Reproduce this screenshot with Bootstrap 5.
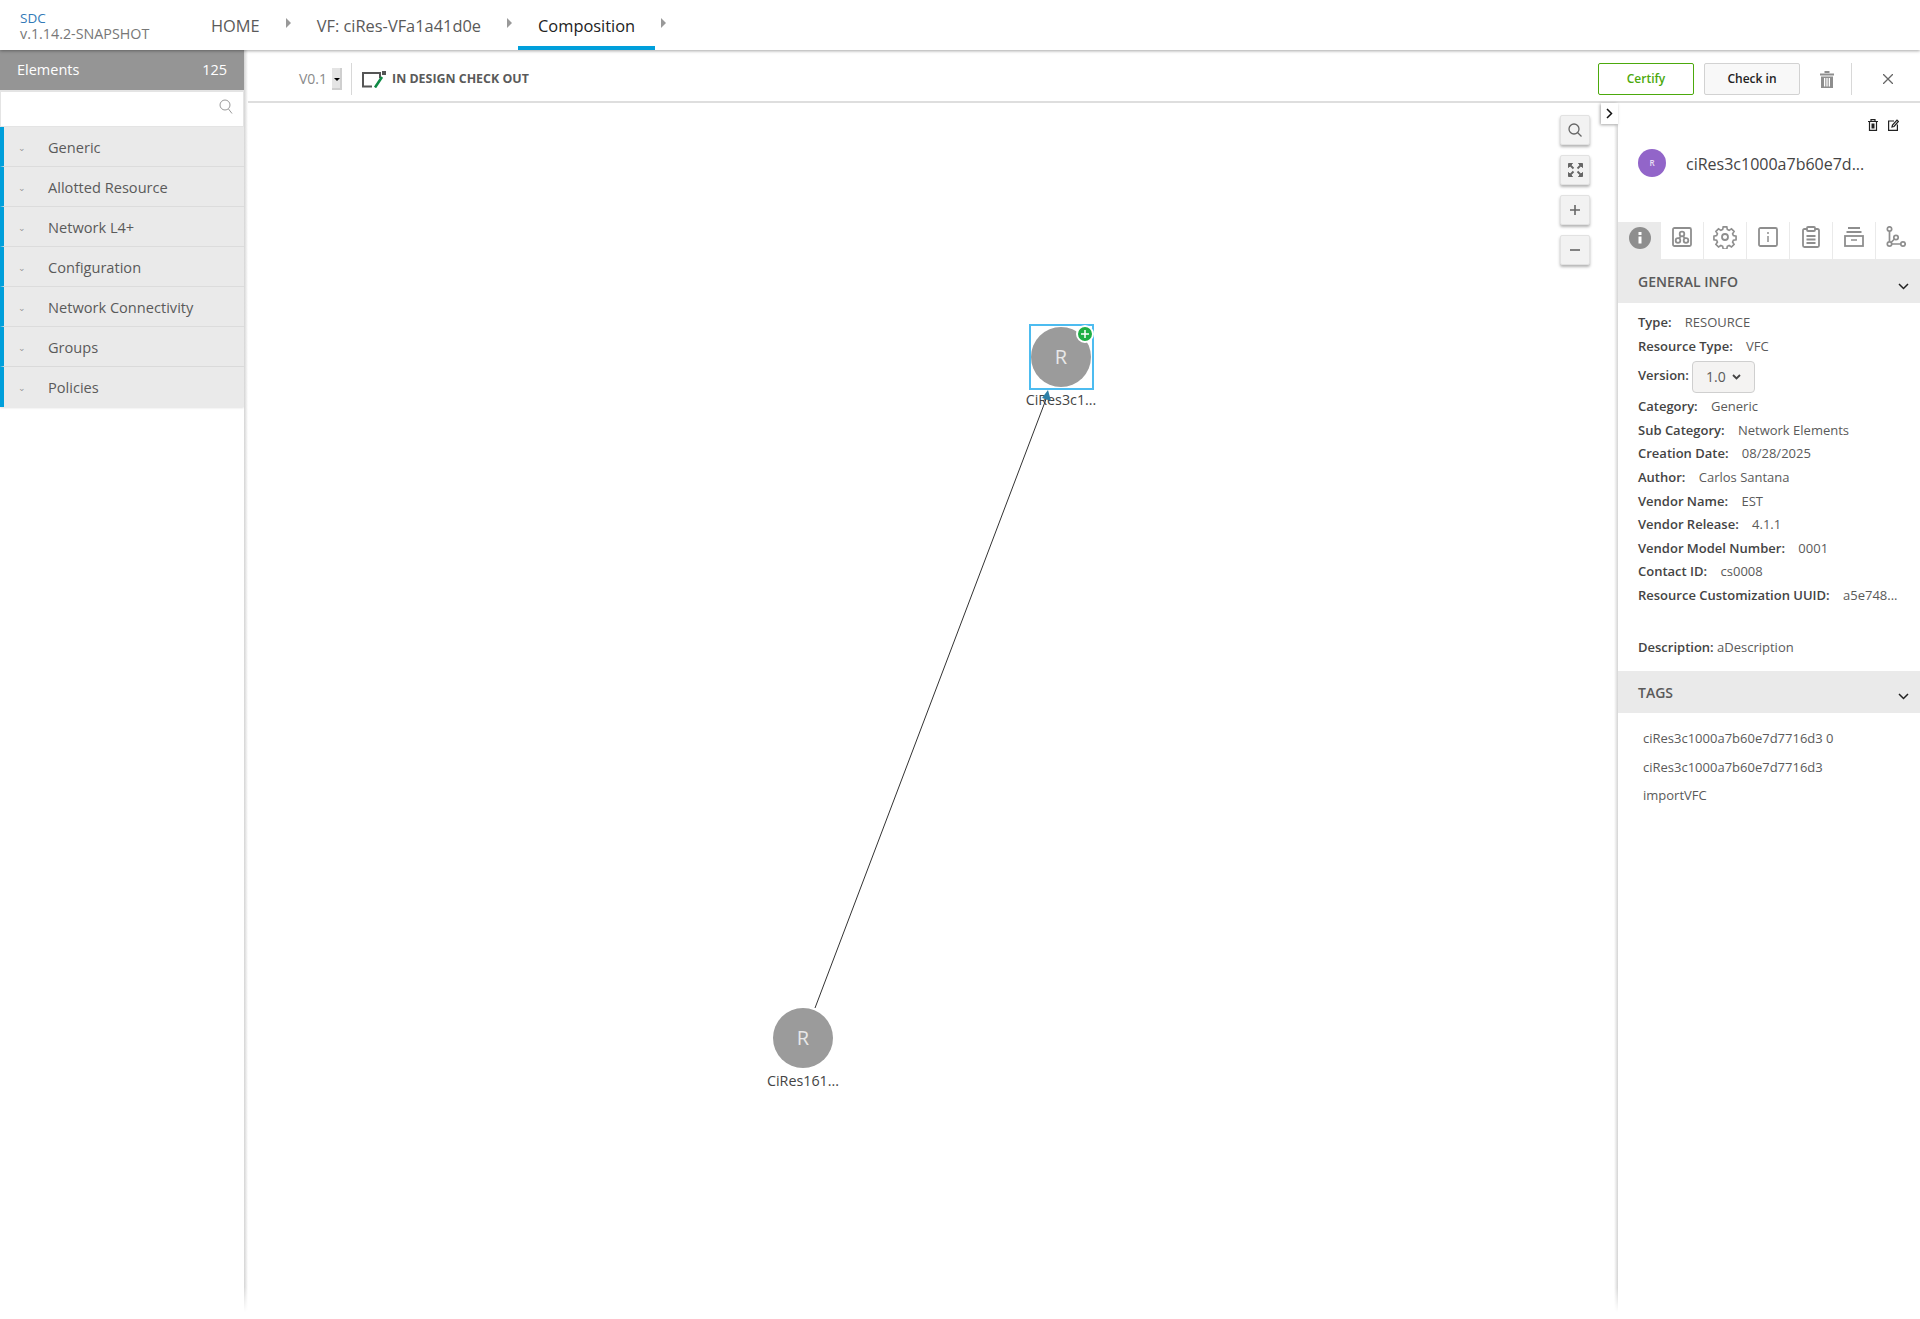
<!doctype html>
<html lang="en">
<head>
  <meta charset="utf-8">
  <meta name="viewport" content="width=device-width, initial-scale=1">
  <title>SDC Composition</title>
  <link href="https://cdn.jsdelivr.net/npm/bootstrap@5.3.3/dist/css/bootstrap.min.css" rel="stylesheet">
  <style>
    html, body { height: 100%; }
    body { font-family: "Open Sans", "Liberation Sans", sans-serif; color: #5a5a5a; overflow: hidden; background: #fff; }
    .sdc-top { height: 50px; position: relative; z-index: 5; box-shadow: 0 1px 3px rgba(0,0,0,.35); background: #fff; }
    .sdc-logo { width: 191px; padding-left: 20px; line-height: 15px; padding-top: 11px; }
    .sdc-logo b { display: block; font-weight: 400; font-size: 13.5px; color: #337ab7; }
    .sdc-logo span { font-size: 14.3px; color: #777; white-space: nowrap; }
    .crumb { font-size: 16.4px; color: #5a5a5a; height: 50px; line-height: 51px; padding: 0 20px; white-space: nowrap; }
    .crumb.on { color: #222; border-bottom: 4px solid #009fdb; }
    .crumb-arrow { width: 0; height: 0; flex: none; border-left: 5px solid #999; border-top: 5px solid transparent; border-bottom: 5px solid transparent; margin: 0 6px 4px; }
    .sdc-main { height: 1262px; }
    .sdc-side { width: 244px; flex: none; background: #fff; position: relative; z-index: 3; }
    .sdc-side::after { content: ""; position: absolute; left: 100%; top: 0; bottom: 0; width: 4px; background: linear-gradient(to right, #d4d4d4, #fff); -webkit-mask-image: linear-gradient(to bottom, #000 98%, transparent); }
    .side-head { height: 40px; background: #959595; color: #fff; font-size: 14.5px; padding: 0 17px; }
    .side-search { height: 37px; border: 1px solid #e4e4e4; border-top-width: 2px; padding: 0 10px 5px 0; }
    .side-item { height: 40px; padding-top: 2px; background: #eaeaea; border-left: 4px solid #009fdb; border-bottom: 1px solid #dcdcdc; font-size: 14.6px; color: #5a5a5a; }
    .side-item:last-child { border-bottom: 0; box-shadow: 0 1px 2px rgba(0,0,0,.12); }
    .side-caret { width: 44px; padding-left: 14px; font-size: 9px; color: #999; }
    .sdc-bar { height: 53px; border-bottom: 2px solid #dedede; padding: 7px 20px 0 55px; }
    .ver-txt { font-size: 14px; color: #8a8a8a; margin-top: -2px; }
    .ver-sel { width: 10px; height: 22px; background: #e4e4e4; border: 1px solid #cfcfcf; border-width: 0 2px 2px 0; margin-left: 5px; position: relative; }
    .ver-sel::after { content: ""; position: absolute; left: 2px; top: 10px; border-left: 3px solid transparent; border-right: 3px solid transparent; border-top: 3px solid #000; }
    .bar-sep { width: 1px; height: 32px; background: #d8d8d8; flex: none; }
    .sep-ver { margin: 0 10px 0 9px; }
    .state-icon { margin-right: 6px; }
    .design-state { font-size: 12.4px; font-weight: 700; color: #5a5a5a; }
    .btn-certify, .btn-certify:hover { width: 96px; height: 32px; padding: 0; font-size: 12px; font-weight: 600; color: #4ca90c; border: 1px solid #4ca90c; background: #fff; border-radius: 2px; }
    .btn-checkin, .btn-checkin:hover { width: 96px; height: 32px; padding: 0; margin-left: 10px; font-size: 12px; font-weight: 600; color: #222; border: 1px solid #d2d2d2; background: #f8f8f8; border-radius: 2px; }
    .bar-trash { margin: 0 17px 0 20px; }
    .bar-close { margin: 0 7px 0 31px; }
    .sdc-body { height: 1209px; }
    .sdc-canvas { position: relative; flex: 1 1 auto; }
    .zoom-btns { position: absolute; top: 12px; right: 28px; gap: 10px; }
    .zoom-btn { width: 30px; height: 30px; background: #f2f2f2; border: 1px solid #e2e2e2; box-shadow: 0 2px 3px rgba(0,0,0,.3); border-radius: 2px; color: #666; }
    .node-wrap { position: absolute; width: 90px; text-align: center; }
    .node-one { left: 772px; top: 224px; }
    .node-two { left: 514px; top: 905px; }
    .node-dot { width: 60px; height: 60px; border-radius: 50%; background: #9b9b9b; color: #e8e8e8; font-size: 20px; font-weight: 400; margin: 0 auto; }
    .node-name { font-size: 14.3px; color: #444; line-height: 19px; margin-top: 3px; }
    .node-picked { position: absolute; border: 2px solid #4dbcf0; width: 65px; height: 66px; left: 13px; top: -3px; }
    .node-plus { position: absolute; width: 18px; height: 18px; border: 2px solid #fff; border-radius: 50%; background: #1eae45; left: 60px; top: -2px; z-index: 2; }
    .link-svg { position: absolute; left: 0; top: 0; width: 100%; height: 100%; z-index: 2; pointer-events: none; }
    .sdc-panel { width: 302px; flex: none; background: #fff; position: relative; z-index: 3; }
    .sdc-panel::before { content: ""; position: absolute; right: 100%; top: 0; bottom: 0; width: 4px; background: linear-gradient(to left, #d4d4d4, #fff); -webkit-mask-image: linear-gradient(to bottom, #000 98%, transparent); }
    .panel-toggle { position: absolute; left: -17px; top: 0; width: 17px; height: 21px; background: #fff; box-shadow: -1px 1px 3px rgba(0,0,0,.35); z-index: 1; }
    .panel-tools { height: 45px; padding: 16px 21px 0 0; gap: 10px; }
    .panel-title { height: 74px; padding: 0 0 44px 20px; }
    .panel-avatar { width: 28px; height: 28px; border-radius: 50%; background: #9265c9; color: #e8e0f4; font-size: 8px; font-weight: 600; margin-right: 20px; }
    .panel-name { font-size: 16px; color: #444; padding-top: 2px; }
    .panel-tabs { height: 39px; border-bottom: 2px solid #eaeaea; }
    .panel-tab { width: 43px; height: 37px; border-right: 1px solid #eaeaea; padding-bottom: 7px; flex: none; }
    .panel-tab.on { background: #eaeaea; border: 0; padding-bottom: 5px; }
    .panel-tab:last-child { border-right: 0; padding-right: 4px; }
    .sect-head { height: 42px; background: #eaeaea; padding: 0 20px; font-size: 14px; font-weight: 600; color: #5a5a5a; position: relative; }
    .sect-head svg { position: absolute; right: 11px; top: 22px; }
    .sect-general { padding-bottom: 2px; }
    .sect-tags { margin-top: 12px; }
    .info-list { padding: 8px 20px 0; font-size: 13px; color: #5a5a5a; }
    .info-row { height: 23.6px; white-space: nowrap; line-height: 23.6px; }
    .info-row b { font-weight: 600; color: #444; margin-right: 10px; }
    .info-row.ver-row { height: 37px; line-height: 34px; }
    .info-row.ver-row b { margin-right: -.5px; }
    .ver-pick { display: inline-flex; align-items: center; justify-content: center; gap: 6px; width: 63px; height: 32px; padding: 0; background: #f4f3f2; border: 1px solid #cfcfcf; border-radius: 4px; font-size: 14px; color: #5a5a5a; vertical-align: middle; }
    .info-row.desc-row { margin-top: 28px; }
    .info-row.desc-row b { margin-right: 0; }
    .tag-list { padding: 11px 25px; font-size: 13px; line-height: 28.4px; color: #5a5a5a; }
  </style>
</head>
<body>
  <!-- top bar -->
  <nav class="sdc-top d-flex align-items-center">
    <div class="sdc-logo align-self-start"><b>SDC</b><span>v.1.14.2-SNAPSHOT</span></div>
    <div class="crumb">HOME</div>
    <div class="crumb-arrow"></div>
    <div class="crumb">VF: ciRes-VFa1a41d0e</div>
    <div class="crumb-arrow"></div>
    <div class="crumb on">Composition</div>
    <div class="crumb-arrow"></div>
  </nav>

  <div class="sdc-main d-flex">
    <!-- left elements -->
    <aside class="sdc-side">
      <div class="side-head d-flex align-items-center justify-content-between"><span>Elements</span><span>125</span></div>
      <div class="side-search d-flex align-items-center justify-content-end">
        <svg width="14" height="15" viewBox="0 0 14 15" fill="none" stroke="#999" stroke-width="1"><circle cx="6" cy="6" r="5"/><path d="M9.5 10l3.5 4.5"/></svg>
      </div>
      <div class="side-item d-flex align-items-center"><span class="side-caret">&#8964;</span>Generic</div>
      <div class="side-item d-flex align-items-center"><span class="side-caret">&#8964;</span>Allotted Resource</div>
      <div class="side-item d-flex align-items-center"><span class="side-caret">&#8964;</span>Network L4+</div>
      <div class="side-item d-flex align-items-center"><span class="side-caret">&#8964;</span>Configuration</div>
      <div class="side-item d-flex align-items-center"><span class="side-caret">&#8964;</span>Network Connectivity</div>
      <div class="side-item d-flex align-items-center"><span class="side-caret">&#8964;</span>Groups</div>
      <div class="side-item d-flex align-items-center"><span class="side-caret">&#8964;</span>Policies</div>
    </aside>

    <div class="flex-grow-1 d-flex flex-column" style="min-width:0">
      <!-- toolbar -->
      <div class="sdc-bar d-flex align-items-center">
        <span class="ver-txt">V0.1</span><span class="ver-sel"></span>
        <span class="bar-sep sep-ver"></span>
        <svg class="state-icon" width="24" height="17" viewBox="0 0 24 17" fill="none">
          <path d="M10 15.500H1V2H18V7" stroke="#555" stroke-width="2"/>
          <rect x="20" y="0" width="4" height="4" fill="#555"/>
          <path d="M13 16.500L20 6" stroke="#0f8a45" stroke-width="2.600"/>
        </svg>
        <span class="design-state">IN DESIGN CHECK OUT</span>
        <button class="btn btn-certify ms-auto" type="button">Certify</button>
        <button class="btn btn-checkin" type="button">Check in</button>
        <svg class="bar-trash" width="14" height="17" viewBox="0 0 14 17" fill="#8e8e8e">
          <path d="M0 2.500h14V4.500H0zM4.500 0h5v2h-5zM1 5.500h12V17H1zM4 7v8.500h1.300V7zM6.350 7v8.500h1.300V7zM8.700 7v8.500H10V7z" fill-rule="evenodd"/>
        </svg>
        <span class="bar-sep"></span>
        <svg class="bar-close" width="10" height="10" viewBox="0 0 10 10" stroke="#666" stroke-width="1.300"><path d="M0 0l10 10M10 0L0 10"/></svg>
      </div>

      <div class="sdc-body d-flex">
        <!-- canvas -->
        <div class="sdc-canvas">
          <svg class="link-svg" fill="none">
            <path d="M571 905L804 291" stroke="#333" stroke-width="1"/>
            <path d="M804 287l3 11-9-3z" fill="#2c7fa8"/>
          </svg>
          <div class="node-wrap node-one">
            <div class="node-picked"></div>
            <div class="node-plus d-flex align-items-center justify-content-center">
              <svg width="8" height="8" viewBox="0 0 8 8" stroke="#fff" stroke-width="1.500"><path d="M4 0v8M0 4h8"/></svg>
            </div>
            <div class="node-dot d-flex align-items-center justify-content-center">R</div>
            <div class="node-name">CiRes3c1...</div>
          </div>
          <div class="node-wrap node-two">
            <div class="node-dot d-flex align-items-center justify-content-center">R</div>
            <div class="node-name">CiRes161...</div>
          </div>
          <div class="zoom-btns d-flex flex-column">
            <div class="zoom-btn d-flex align-items-center justify-content-center">
              <svg width="14" height="14" viewBox="0 0 14 14" fill="none" stroke="#666" stroke-width="1.300"><circle cx="6" cy="6" r="5"/><path d="M9.500 9.500L13.500 13.500"/></svg>
            </div>
            <div class="zoom-btn d-flex align-items-center justify-content-center">
              <svg width="15" height="14" viewBox="0 0 15 14" fill="#666" stroke="#666"><path d="M.5.500h4l-4 4zM14.500.500h-4l4 4zM.5 13.500h4l-4-4zM14.500 13.500h-4l4-4z"/><path d="M2 2l3.500 3.500M13 2L9.500 5.500M2 12l3.500-3.500M13 12L9.500 8.500" stroke-width="1.800"/></svg>
            </div>
            <div class="zoom-btn d-flex align-items-center justify-content-center">
              <svg width="12" height="12" viewBox="0 0 12 12" stroke="#666" stroke-width="1.600"><path d="M6 1v10M1 6h10"/></svg>
            </div>
            <div class="zoom-btn d-flex align-items-center justify-content-center">
              <svg width="12" height="12" viewBox="0 0 12 12" stroke="#666" stroke-width="1.600"><path d="M1 6h10"/></svg>
            </div>
          </div>
        </div>

        <!-- right panel -->
        <div class="sdc-panel">
          <div class="panel-toggle d-flex align-items-center justify-content-center">
            <svg width="7" height="11" viewBox="0 0 7 11" fill="none" stroke="#111" stroke-width="1.500"><path d="M1 1l4.500 4.500L1 10"/></svg>
          </div>
          <div class="panel-tools d-flex justify-content-end">
            <svg width="10" height="12" viewBox="0 0 10 12" fill="none" stroke="#222" stroke-width="1.200"><path d="M0 2.500h10M3 2.500V.6h4v1.900M1.500 2.500v8.900h7V2.500"/><path d="M3.500 4.500h3v5h-3z" fill="#222" stroke="none"/></svg>
            <svg width="11" height="12" viewBox="0 0 11 12" fill="none" stroke="#222" stroke-width="1.200"><path d="M6 2H.6v9.400h8.800V5.500"/><path d="M4 8l.5-2L9 1.100l1.400 1.400L6 7.500z"/></svg>
          </div>
          <div class="panel-title d-flex align-items-center">
            <div class="panel-avatar d-flex align-items-center justify-content-center">R</div>
            <div class="panel-name">ciRes3c1000a7b60e7d...</div>
          </div>

          <div class="panel-tabs d-flex">
            <div class="panel-tab on d-flex align-items-center justify-content-center">
              <svg width="22" height="22" viewBox="0 0 22 22"><circle cx="11" cy="11" r="11" fill="#8e8e8e"/><rect x="9.500" y="5" width="3" height="3" fill="#fff"/><rect x="9.500" y="9.500" width="3" height="7" fill="#fff"/></svg>
            </div>
            <div class="panel-tab d-flex align-items-center justify-content-center">
              <svg width="20" height="20" viewBox="0 0 20 20" fill="none" stroke="#8e8e8e" stroke-width="1.800"><rect x="1" y="1" width="18" height="18" rx="1.500"/><circle cx="10" cy="7" r="2.300"/><circle cx="6" cy="13.500" r="2.300"/><circle cx="14" cy="13.500" r="2.300"/><path d="M9 9l-2 2.500M11 9l2 2.500"/></svg>
            </div>
            <div class="panel-tab d-flex align-items-center justify-content-center">
              <svg width="24" height="24" viewBox="0 0 24 24" fill="none" stroke="#8e8e8e" stroke-width="1.800"><circle cx="12" cy="12" r="3"/><path d="M10 1.500h4l.6 3 2 .9 2.600-1.700 2.900 2.900-1.700 2.600.9 2 3 .6v4l-3 .6-.9 2 1.700 2.600-2.900 2.900-2.600-1.700-2 .9-.6 3h-4l-.6-3-2-.9-2.600 1.700-2.900-2.900 1.700-2.600-.9-2-3-.6v-4l3-.6.9-2-1.700-2.600 2.900-2.900 2.600 1.700 2-.9z" transform="translate(1.200 .5) scale(.9)"/></svg>
            </div>
            <div class="panel-tab d-flex align-items-center justify-content-center">
              <svg width="20" height="20" viewBox="0 0 20 20" fill="none" stroke="#8e8e8e" stroke-width="1.800"><rect x="1" y="1" width="18" height="18" rx="1.500"/><path d="M10 5v2M10 9v6" stroke-width="1.500"/></svg>
            </div>
            <div class="panel-tab d-flex align-items-center justify-content-center">
              <svg width="18" height="22" viewBox="0 0 18 22" fill="none" stroke="#8e8e8e" stroke-width="1.800"><path d="M5 3H2.500Q1 3 1 4.500v15Q1 21 2.500 21h13q1.500 0 1.500-1.500v-15Q17 3 15.500 3H13"/><rect x="5" y="1" width="8" height="4" rx="1"/><path d="M4.500 10h9M4.500 13.500h9M4.500 17h9"/></svg>
            </div>
            <div class="panel-tab d-flex align-items-center justify-content-center">
              <svg width="20" height="20" viewBox="0 0 20 20" fill="none" stroke="#8e8e8e" stroke-width="1.800"><path d="M4 1h12M2.500 5h15"/><rect x="1" y="9" width="18" height="10"/><path d="M7 13h6" stroke-width="1.500"/></svg>
            </div>
            <div class="panel-tab d-flex align-items-center justify-content-center">
              <svg width="20" height="22" viewBox="0 0 20 22" fill="none" stroke="#8e8e8e" stroke-width="1.700"><circle cx="3.500" cy="3" r="2.200"/><circle cx="3.500" cy="18" r="2.200"/><circle cx="10" cy="11.500" r="2.200"/><circle cx="17" cy="18" r="2.200"/><path d="M3.500 5.200v10.600M5.700 18h9.100M5 16.500l3.500-3.500"/></svg>
            </div>
          </div>

          <div class="sect-head sect-general d-flex align-items-center">GENERAL INFO
            <svg width="11" height="7" viewBox="0 0 11 7" fill="none" stroke="#222" stroke-width="1.500"><path d="M1 1l4.500 4.500L10 1"/></svg>
          </div>
          <div class="info-list">
            <div class="info-row"><b>Type:</b> RESOURCE</div>
            <div class="info-row"><b>Resource Type:</b> VFC</div>
            <div class="info-row ver-row"><b>Version:</b>
              <button class="ver-pick" type="button">1.0
                <svg width="9" height="6" viewBox="0 0 9 6" fill="none" stroke="#444" stroke-width="1.800"><path d="M1 1l3.500 3.500L8 1"/></svg>
              </button>
            </div>
            <div class="info-row"><b>Category:</b> Generic</div>
            <div class="info-row"><b>Sub Category:</b> Network Elements</div>
            <div class="info-row"><b>Creation Date:</b> 08/28/2025</div>
            <div class="info-row"><b>Author:</b> Carlos Santana</div>
            <div class="info-row"><b>Vendor Name:</b> EST</div>
            <div class="info-row"><b>Vendor Release:</b> 4.1.1</div>
            <div class="info-row"><b>Vendor Model Number:</b> 0001</div>
            <div class="info-row"><b>Contact ID:</b> cs0008</div>
            <div class="info-row"><b>Resource Customization UUID:</b> a5e748...</div>
            <div class="info-row desc-row"><b>Description:</b> aDescription</div>
          </div>
          <div class="sect-head sect-tags d-flex align-items-center">TAGS
            <svg width="11" height="7" viewBox="0 0 11 7" fill="none" stroke="#222" stroke-width="1.500"><path d="M1 1l4.500 4.500L10 1"/></svg>
          </div>
          <div class="tag-list">
            <div>ciRes3c1000a7b60e7d7716d3 0</div>
            <div>ciRes3c1000a7b60e7d7716d3</div>
            <div>importVFC</div>
          </div>
        </div>
      </div>
    </div>
  </div>
  <script src="https://cdn.jsdelivr.net/npm/bootstrap@5.3.3/dist/js/bootstrap.bundle.min.js"></script>
</body>
</html>
